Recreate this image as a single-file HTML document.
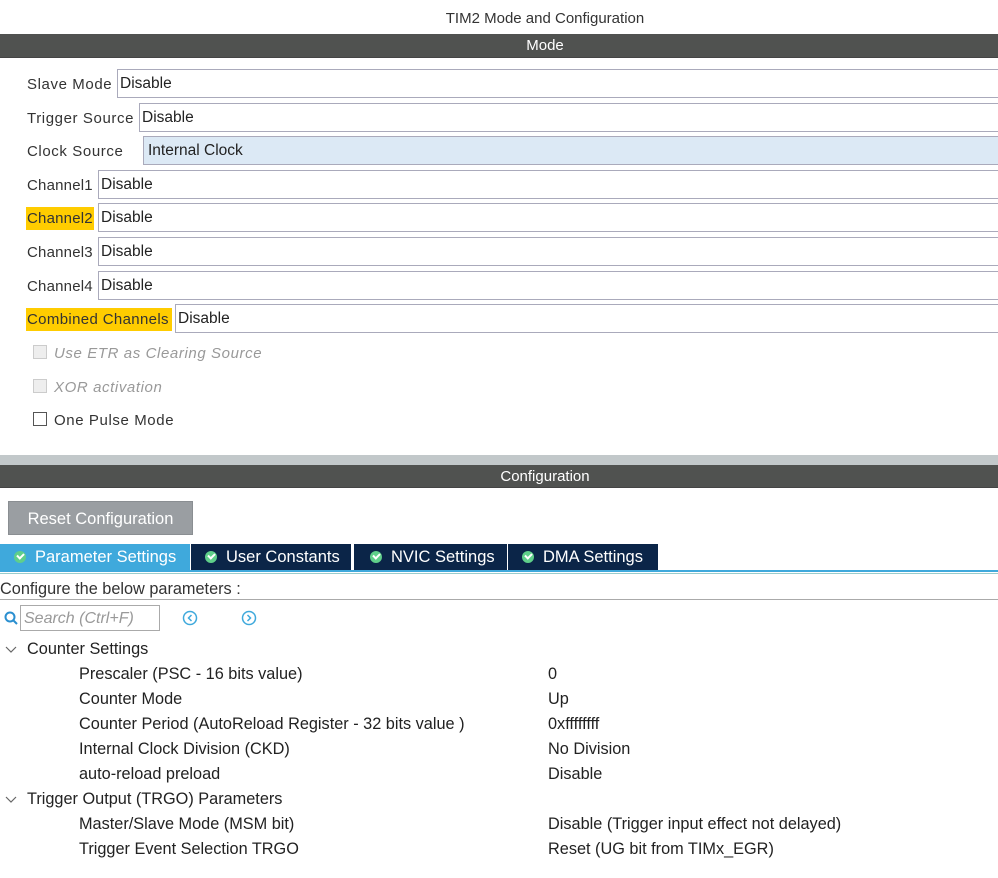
<!DOCTYPE html><html><head><style>
body{margin:0;width:998px;height:878px;position:relative;overflow:hidden;background:#fff;font-family:"Liberation Sans",sans-serif;color:#222}
.a{position:absolute;white-space:nowrap}
.lbl{font-size:15px;color:#333;letter-spacing:.6px}
.f{position:absolute;height:27px;right:-2px;border:1px solid #aab;background:#fff;font-size:15.5px;line-height:28px;padding-left:2px;color:#222;box-sizing:content-box}
.hl{background:#ffcc00}
.cb{position:absolute;width:12px;height:12px;border:1px solid #888;background:#fff}
.tab{position:absolute;top:544px;height:26px;background:#0b2548;color:#fff;font-size:16.5px;line-height:26px}
.ck{display:inline-block;width:12px;height:12px;border-radius:50%;background:#5fcf8a;vertical-align:-1px;margin-right:9px;position:relative}
.ck:after{content:"";position:absolute;left:3px;top:2px;width:5px;height:3px;border-left:2px solid #fff;border-bottom:2px solid #fff;transform:rotate(-45deg)}
.p{font-size:16.3px;color:#222}
</style></head><body>
<div class="a" style="left:0;width:1090px;text-align:center;top:10px;font-size:15px;color:#333">TIM2 Mode and Configuration</div>
<div class="a" style="left:0;right:0;top:34px;height:23px;background:#505250;color:#fff;text-align:center;font-size:15px;line-height:24px;border-bottom:1px solid #444"><span style="margin-left:92px">Mode</span></div>

<div class="a lbl" style="left:27px;top:76px">Slave Mode</div><div class="f" style="left:117px;top:69px">Disable</div>
<div class="a lbl" style="left:27px;top:110px">Trigger Source</div><div class="f" style="left:139px;top:103px">Disable</div>
<div class="a lbl" style="left:27px;top:143px">Clock Source</div><div class="f" style="left:143px;top:136px;background:#dce9f5;padding-left:4px">Internal Clock</div>
<div class="a lbl" style="left:27px;top:177px;letter-spacing:.2px">Channel1</div><div class="f" style="left:98px;top:170px">Disable</div>
<div class="a lbl hl" style="left:26px;top:207px;height:23px;line-height:23px;padding:0 1px;letter-spacing:.2px">Channel2</div><div class="f" style="left:98px;top:203px">Disable</div>
<div class="a lbl" style="left:27px;top:244px;letter-spacing:.2px">Channel3</div><div class="f" style="left:98px;top:237px">Disable</div>
<div class="a lbl" style="left:27px;top:278px;letter-spacing:.2px">Channel4</div><div class="f" style="left:98px;top:271px">Disable</div>
<div class="a lbl hl" style="left:26px;top:308px;height:23px;line-height:23px;padding:0 3px 0 1px;letter-spacing:.35px">Combined Channels</div><div class="f" style="left:175px;top:304px">Disable</div>

<div class="cb" style="left:33px;top:345px;background:#eee;border-color:#ccc"></div><div class="a lbl" style="left:54px;top:345px;color:#999;font-style:italic">Use ETR as Clearing Source</div>
<div class="cb" style="left:33px;top:379px;background:#eee;border-color:#ccc"></div><div class="a lbl" style="left:54px;top:379px;color:#999;font-style:italic">XOR activation</div>
<div class="cb" style="left:33px;top:412px;border-color:#555"></div><div class="a lbl" style="left:54px;top:412px">One Pulse Mode</div>

<div class="a" style="left:0;right:0;top:455px;height:10px;background:#c2c8ca"></div>
<div class="a" style="left:0;right:0;top:465px;height:22px;background:#505250;color:#fff;text-align:center;font-size:15px;line-height:24px;border-bottom:1px solid #444"><span style="margin-left:92px">Configuration</span></div>

<div class="a" style="left:8px;top:501px;width:183px;height:32px;background:#9a9ea2;border:1px solid #8a8e92;color:#fff;font-size:16.5px;line-height:34px;text-align:center">Reset Configuration</div>

<div class="tab" style="left:0;padding-left:14px;width:176px;background:#3fa9dc"><span class="ck"></span>Parameter Settings</div>
<div class="tab" style="left:191px;width:146px;padding-left:14px"><span class="ck"></span>User Constants</div>
<div class="tab" style="left:353px;width:140px;padding-left:16px;border-left:1px solid #fff"><span class="ck"></span>NVIC Settings</div>
<div class="tab" style="left:507px;padding-left:14px;border-left:1px solid #fff;width:136px"><span class="ck"></span>DMA Settings</div>
<div class="a" style="left:0;right:0;top:570px;height:2px;background:#3fa9dc"></div>
<div class="a" style="left:0;right:0;top:573px;height:1px;background:#9cc"></div>
<div class="a" style="left:0;top:580px;font-size:16.3px;color:#333">Configure the below parameters :</div>
<div class="a" style="left:0;right:0;top:599px;height:1px;background:#aaa"></div>

<svg class="a" style="left:4px;top:611px" width="16" height="16"><circle cx="6" cy="6" r="4.5" fill="none" stroke="#2a8fd0" stroke-width="2"/><line x1="9" y1="9" x2="13" y2="13" stroke="#2a8fd0" stroke-width="2"/></svg>
<div class="a" style="left:20px;top:605px;width:135px;height:24px;border:1px solid #aaa;font-size:16px;font-style:italic;color:#999;line-height:26px;padding-left:3px">Search (Ctrl+F)</div>
<svg class="a" style="left:182px;top:610px" width="16" height="16"><circle cx="8" cy="8" r="6.5" fill="none" stroke="#3fa9dc" stroke-width="1.5"/><path d="M9.5 5 L6.5 8 L9.5 11" fill="none" stroke="#3fa9dc" stroke-width="1.5"/></svg>
<svg class="a" style="left:241px;top:610px" width="16" height="16"><circle cx="8" cy="8" r="6.5" fill="none" stroke="#3fa9dc" stroke-width="1.5"/><path d="M6.5 5 L9.5 8 L6.5 11" fill="none" stroke="#3fa9dc" stroke-width="1.5"/></svg>

<svg class="a" style="left:5px;top:645px" width="12" height="10"><path d="M1 2 L6 7 L11 2" fill="none" stroke="#666" stroke-width="1.2"/></svg>
<div class="a p" style="left:27px;top:640px">Counter Settings</div>
<div class="a p" style="left:79px;top:665px">Prescaler (PSC - 16 bits value)</div><div class="a p" style="left:548px;top:665px">0</div>
<div class="a p" style="left:79px;top:690px">Counter Mode</div><div class="a p" style="left:548px;top:690px">Up</div>
<div class="a p" style="left:79px;top:715px">Counter Period (AutoReload Register - 32 bits value )</div><div class="a p" style="left:548px;top:715px">0xffffffff</div>
<div class="a p" style="left:79px;top:740px">Internal Clock Division (CKD)</div><div class="a p" style="left:548px;top:740px">No Division</div>
<div class="a p" style="left:79px;top:765px">auto-reload preload</div><div class="a p" style="left:548px;top:765px">Disable</div>
<svg class="a" style="left:5px;top:795px" width="12" height="10"><path d="M1 2 L6 7 L11 2" fill="none" stroke="#666" stroke-width="1.2"/></svg>
<div class="a p" style="left:27px;top:790px">Trigger Output (TRGO) Parameters</div>
<div class="a p" style="left:79px;top:815px">Master/Slave Mode (MSM bit)</div><div class="a p" style="left:548px;top:815px">Disable (Trigger input effect not delayed)</div>
<div class="a p" style="left:79px;top:840px">Trigger Event Selection TRGO</div><div class="a p" style="left:548px;top:840px">Reset (UG bit from TIMx_EGR)</div>
</body></html>
